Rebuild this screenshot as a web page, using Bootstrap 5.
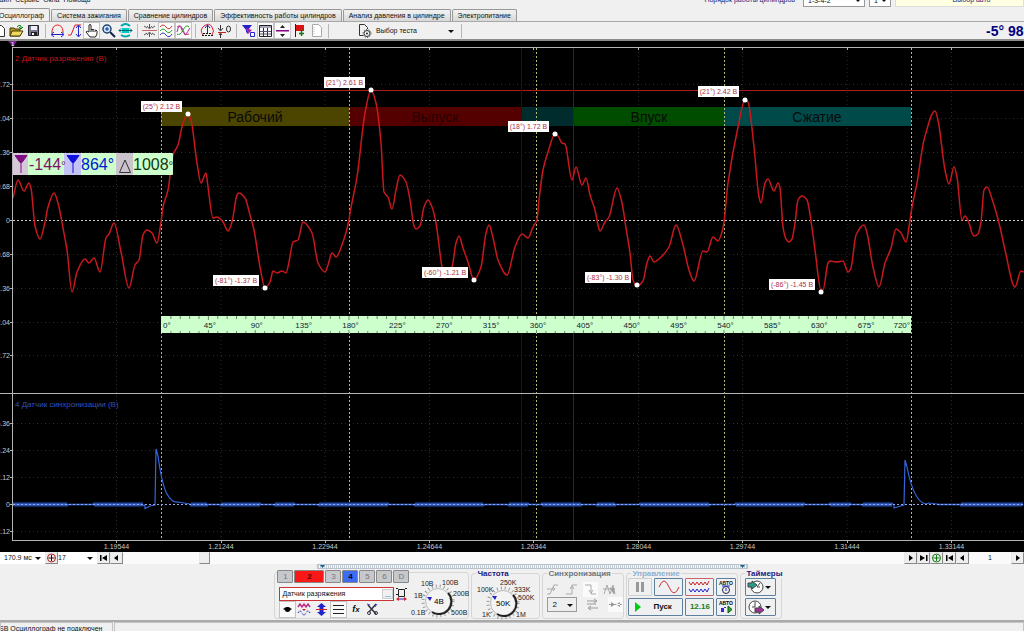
<!DOCTYPE html>
<html lang="ru">
<head>
<meta charset="utf-8">
<meta name="viewport" content="width=device-width, initial-scale=1">
<title>Осциллограф</title>
<link href="https://cdn.jsdelivr.net/npm/bootstrap@5.3.0/dist/css/bootstrap.min.css" rel="stylesheet">
<style>
body{height:100vh;overflow:hidden;background:#f0f0f0;color:#111;font:7px/12px "Liberation Sans",Arial,sans-serif}
button,input,select{font:inherit;color:inherit;border-radius:0;margin:0}
a{color:inherit;text-decoration:none}
svg{display:block;flex:none}
.menu-bar{height:9px}
.menu-bar>*{height:14px;line-height:14px;margin-bottom:2px}
.menu-links{margin-left:-6px}
.navy{color:#1a1a80}
.pick{appearance:none;background:#fff;border:1px solid #999;padding:0 4px}
.drop{position:relative}
.drop select{width:100%;height:100%}
.drop::after{content:"";position:absolute;right:4px;top:50%;margin-top:-1px;border:3px solid transparent;border-top-color:#111;border-bottom:0;pointer-events:none}
.w-order{width:62px}.w-num{width:22px}.w-time{width:45px}.w-frame{width:39px}
.auto-pick{background:#ffffe1;border:1px solid #ddd;border-top:0;width:129px;padding:0}
.tabs-row{height:13px;border-bottom:1px solid #a8a8a8;gap:1px}
.tab-btn{height:12px;line-height:11px;padding:0 5px;border:1px solid #989898;border-bottom:0;background:linear-gradient(#f2f2f2,#d8d8d8);border-radius:2px 2px 0 0;white-space:nowrap}
.tab-btn.active{background:#f0f0f0;height:13px;margin-left:-7px}
.tools{height:19px;border-bottom:2px solid #8a8d8a}
.tool{width:17px;height:17px;border:1px solid transparent;background:none;padding:0}
.tool.on{background:#fafafa;border-color:#c4c4c4}
.tools-start{margin-left:-9px}
.sep{width:1px;height:14px;background:#b8b8b8;margin:0 3px}
.test-pick{background:none;border:0;padding:0 4px 0 0;width:101px;margin-left:25px}
.angle{width:38px;font-size:14px;font-weight:700;color:#000080}
.plot{background:#000;min-height:0}
.plot svg{width:100%;height:100%}
.scroll-row{height:12px;background:#fafafa}
.sbtn{height:12px;width:13px;padding:0;border:1px solid #e8e8e8;border-right-color:#888;border-bottom-color:#888;background:#eee}
.thumb{width:11px}
.page-no{width:42px}
.track{height:12px;background:#fafafa;padding-left:76px}
.dock{height:57px}
.split-bar{height:5px;margin-left:31%;width:42%;border:1px solid #b9c2cc;background:repeating-linear-gradient(90deg,#c4ccd6 0 1px,#f4f6f8 1px 2px)}
.groups{padding-left:26.8%;border-bottom:1px solid #aaa;height:52px;gap:2px}
fieldset.box{border:1px solid #d6d6d6;border-radius:3px;height:47px;margin-top:3px}
fieldset.titled{height:50px;margin-top:0}
fieldset.titled legend{float:none;width:auto;font-size:8px;line-height:9px;font-weight:700;margin:0 0 0 4px;padding:0 1px}
.w-ch{width:195px}.w-fr{width:69px}.w-sy{width:82px}.w-ct{width:112px}.w-tm{width:42px}
.ch-row{gap:1px;margin:-3px 0 0 -2px}
.name-row{gap:1px}
.ch{width:16px;height:13px;line-height:10px;font-size:8px;padding:0;border:1px solid #888;background:#c6c8cc;color:#777;border-radius:1px}
.ch.red{width:30px;background:#f81818;color:#500;font-weight:700}
.ch.blue{background:#3c6cf4;color:#002;font-weight:700}
.name-box{width:115px;border:1px solid #c33;background:#fff;height:14px}
.name-box input{border:0;padding:0 2px;width:102px;background:none}
.name-box button{border:1px solid #ccc;background:#f0f0f0;width:11px;height:10px;line-height:5px;padding:0}
.fx{font-size:9px}
.w-src{width:31px;height:15px;font-size:8px}
.w-src select{background:#eee}
.keys{grid-template-columns:24px 29px 29px 20px;gap:2px;padding-left:1px;font-size:8px}
.key{border:1px solid #5f7f9f;background:#eef0f2;padding:0;height:18px;border-radius:1px}
.key.off{border-color:#d0d0d0}
.key.r{border-color:#c66}
.key.start{grid-column:span 2}
.key.rate{color:#187818}
.pale{color:#8fb0d0}
.timers{gap:2px}
.k-t{width:31px}
.status{height:10px;border-top:1px solid #aaa;gap:1px}
.status>div{line-height:11px;border:1px solid #c4c4c4;border-bottom:0;height:12px}
.status .s-one{width:113px;text-indent:-7px}
.chart text{font-family:"Liberation Sans",Arial,sans-serif}
</style>
</head>
<body class="d-flex flex-column">
<nav class="menu-bar d-flex align-items-end overflow-hidden flex-shrink-0" aria-label="Меню">
  <div class="menu-links d-flex gap-1 flex-grow-1">
    <a href="#">Файл</a><a href="#">Сервис</a><a href="#">Окна</a><a href="#">Помощь</a>
  </div>
  <label for="order" class="navy me-2">Порядок работы цилиндров</label>
  <div class="drop w-order"><select id="order" class="pick"><option>1-3-4-2</option></select></div>
  <div class="drop ms-1 w-num"><select aria-label="Цилиндр" class="pick"><option>1</option></select></div>
  <button class="auto-pick ms-1 navy"><span class="ps-4">Выбор авто</span></button>
</nav>
<div class="tabs-row d-flex align-items-end flex-shrink-0" role="tablist">
  <button class="tab-btn active" role="tab">Осциллограф</button>
  <button class="tab-btn" role="tab">Система зажигания</button>
  <button class="tab-btn" role="tab">Сравнение цилиндров</button>
  <button class="tab-btn" role="tab">Эффективность работы цилиндров</button>
  <button class="tab-btn" role="tab">Анализ давления в цилиндре</button>
  <button class="tab-btn" role="tab">Электропитание</button>
</div>
<div class="tools d-flex align-items-center flex-shrink-0">
  <div class="tools-start d-flex align-items-center">
    <button class="tool" aria-label="Новый"><svg width="15" height="15" fill="#fff" stroke="#333"><path d="M4.500 2.500h5l3 3v8h-8z"/></svg></button>
    <button class="tool" aria-label="Открыть"><svg width="15" height="15"><path d="M1 5h4l1 1h5v7H1z" fill="#b89a2a" stroke="#443a00"/><path d="M3 8h11l-3 5H1z" fill="#f0d860" stroke="#443a00"/><path d="M8 4q2-3 4-1v2m-2-1 2 2 2-2" fill="none" stroke="#080"/></svg></button>
    <button class="tool" aria-label="Сохранить"><svg width="15" height="15"><path d="M2.500 2.500h10v10h-10z" fill="#778" stroke="#223"/><path d="M5 3h6v4H5z" fill="#eef"/><path d="M5 9h6v4H5z" fill="#222"/><path d="M6 10h2v2H6z" fill="#fff"/></svg></button>
    <i class="sep"></i>
    <button class="tool" aria-label="Ширина"><svg width="15" height="15" fill="none"><path d="M2 10V8q1-6 5.500-6T13 8v2" stroke="#d22"/><path d="M2 11.500h11M4 9l-3 2.500L4 14M11 9l3 2.500L11 14" stroke="#22c"/></svg></button>
    <button class="tool" aria-label="Высота"><svg width="15" height="15" fill="none"><path d="M1 12h3L8 2h6" stroke="#d22"/><path d="M11.500 3v10M9 5l2.500-3L14 5M9 11l2.500 3 2.500-3" stroke="#22c"/></svg></button>
    <button class="tool on" aria-label="Рука"><svg width="15" height="15"><path d="M5 9V2q1-1 2 0v5l1-1 1 1 1-.5 1 1 1-.5 1 1v3l-1.500 3H6L2 9q1-1.500 3 0zM7 7v2m2-2v2m2-1v1" fill="#fff" stroke="#222"/></svg></button>
    <button class="tool" aria-label="Масштаб"><svg width="15" height="15"><path d="m9 9 5 5" stroke="#124" stroke-width="2"/><circle cx="6" cy="6" r="4" fill="#cfe6ff" stroke="#246" stroke-width="1.500"/><path d="M4 6h4M6 4v4" stroke="#13a"/></svg></button>
    <button class="tool" aria-label="Растянуть"><svg width="15" height="15" fill="none"><path d="M3 3q4.500-4 9 0M3 12q4.500 3 9 0" stroke="#0aa" stroke-width="2"/><path d="M4 5h7v5H4z" fill="#0cc"/><path d="M1 7.500h13M3 5.500l-2 2 2 2m9-4 2 2-2 2M5 7.500h5" stroke="#066"/></svg></button>
    <i class="sep"></i>
    <button class="tool" aria-label="Центр"><svg width="15" height="15" fill="none"><path d="M0 7.500h15" stroke="#c66"/><path d="M2 3l3 2m8-2-3 2M2 12l3-2m8 2-3-2M7.500 1v4m0 9v-4M5 3l2.500 3L10 3m-5 9 2.500-3 2.500 3" stroke="#555"/></svg></button>
    <button class="tool on" aria-label="Раздельно"><svg width="15" height="15" fill="none"><path d="M1 4q3-4 6 0t6-1" stroke="#c33"/><path d="M1 8q3-4 6 0t6-1" stroke="#2a2"/><path d="M1 12q3-4 6 0t6-1" stroke="#33c"/></svg></button>
    <button class="tool on" aria-label="Совместно"><svg width="15" height="15" fill="none"><path d="M1 4q3-3 5 3t7 4" stroke="#c33"/><path d="M1 9q2-10 5-4t3 7 5-7" stroke="#a2a"/><path d="M1 11q3 2 6-4t6-3" stroke="#2a2"/></svg></button>
    <i class="sep"></i>
    <button class="tool" aria-label="Авто"><svg width="15" height="15" fill="none"><path d="M3 12q-4-5 1-9t8 1q3 4 0 8" stroke="#d22"/><path d="M7.500 2v8M5 5l2.500-3L10 5" stroke="#22c"/><path d="M2 12.500h11M3 10.500h9" stroke="#111" stroke-dasharray="2 1"/></svg></button>
    <button class="tool" aria-label="Ноль"><svg width="15" height="15" fill="none"><path d="M1 9.500h8" stroke="#c22"/><path d="M3.500 2v5M1 5l2.500 3L6 5M3.500 15v-4M2 12l1.500-2L5 12" stroke="#333"/><ellipse cx="11.500" cy="6" rx="2" ry="3" stroke="#333"/></svg></button>
    <i class="sep"></i>
    <button class="tool" aria-label="Маркеры"><svg width="15" height="15" fill="none"><path d="M1 2h10L7 7v4L5 9V7z" fill="#22c"/><path d="M5 5l6 2-4 4z" fill="#a2a"/><path d="M9.500 9.500h4v4h-4z" stroke="#22c" fill="#fff"/></svg></button>
    <button class="tool on" aria-label="Таблица"><svg width="15" height="15" fill="none"><path d="M1.500 2.500h12v11h-12zM5.500 5v8m4-8v8" stroke="#222"/><path d="M2 4h11M2 8.500h11M2 11h11" stroke="#557"/></svg></button>
    <button class="tool on" aria-label="Линия"><svg width="15" height="15" fill="#222"><path d="M1 7h13v1.500H1z" fill="#808"/><path d="M7.500 2 10 5H5zM7.500 14 10 11H5z"/></svg></button>
    <button class="tool" aria-label="Флаг"><svg width="15" height="15"><path d="M3.500 1v13" stroke="#222"/><path d="M4 2h8v6H4z" fill="#d11"/><path d="M9.500 6v7M7 10.500h5" stroke="#171" stroke-width="1.500"/></svg></button>
    <button class="tool" aria-label="Отчёт"><svg width="15" height="15"><path d="M3.500 1.500h6l3 3v9h-9z" fill="#fff" stroke="#aaa"/><path d="M5 4v8" stroke="#bbb" stroke-dasharray="1 1"/></svg></button>
    <i class="sep"></i>
    <button class="test-pick drop d-flex align-items-center"><svg width="15" height="15" fill="none" stroke="#333"><path d="M6 12.500H2.500v-11h5l3 3V6"/><circle cx="10" cy="10.500" r="3"/><circle cx="10" cy="10.500" r="4" stroke-dasharray="1 1.500"/><path d="M10 9.500v2m-1-1h2"/></svg><span class="ps-1">Выбор теста</span></button>
    <i class="sep"></i>
  </div>
  <output class="angle ms-auto text-nowrap overflow-hidden">-5° 980</output>
</div>

<main class="plot flex-grow-1">
<svg class="chart" viewBox="0 41 1024 511" role="img" aria-label="Осциллограмма">
  <g id="grid" stroke="#2b2b2b" stroke-dasharray="1 3"></g>
  <g shape-rendering="crispEdges">
    <rect x="161" y="107" width="189" height="19" fill="#4b4500"/>
    <rect x="349" y="107" width="172" height="19" fill="#550000"/>
    <rect x="521" y="107" width="52" height="19" fill="#002c2e"/>
    <rect x="573" y="107" width="151" height="19" fill="#004d00"/>
    <rect x="724" y="107" width="187" height="19" fill="#004a4a"/>
    <path d="M13 90.500H1024" stroke="#b01c1c"/>
    <path d="M521.500 48V540" stroke="#0c0c70"/>
    <path d="M573.500 48V540" stroke="#641010"/>
    <path d="M161.500 48V540M349.500 48V540M536.500 48V540M724.500 48V540M911.500 48V540" stroke="#b8b870" stroke-dasharray="2 2"/>
    <path d="M13 220.500H1024" stroke="#ccc" stroke-dasharray="2 2"/>
  </g>
  <g font-size="14" fill="#0a0a0a" text-anchor="middle">
    <text x="255" y="122">Рабочий</text><text x="435" y="122" fill="#250000">Выпуск</text><text x="649" y="122">Впуск</text><text x="817" y="122">Сжатие</text>
  </g>
  <path id="vac" fill="none" stroke="#c8181e" stroke-width="1.500"/>
  <path id="sync" fill="none" stroke="#3565dc" stroke-width="1.200"/>
  <path d="M13 504.500H1024" stroke="#8fa6e8" stroke-dasharray="2 2"/>
  <g stroke="#b4b4b4" shape-rendering="crispEdges" id="axes"><path d="M12 47.500H1024M12.500 47V540M0 393.500H1024M12 540.500H1024"/></g>
  <g id="scale" fill="#c8c8c8" font-size="7"></g>
  <path d="M8 41h9l-4 6z" fill="#7a1f8c"/><text x="11" y="46" font-size="6" fill="#fff">1</text>
  <text x="15" y="61" font-size="8" fill="#c0161c">2 Датчик разряжения (В)</text>
  <text x="15" y="407" font-size="8" fill="#3050c0">4 Датчик синхронизации (В)</text>
  <g id="ruler" font-size="8" fill="#123"></g>
  <g id="tags" font-size="7" fill="#b0303c"></g>
  <g>
    <rect x="13" y="153" width="160" height="22" rx="1" fill="#ccffcc"/>
    <path d="M13 153h15v22H13z" fill="#d6c8d8"/><path d="M64 153h17v22H64z" fill="#c4c4f4"/><path d="M116 153h17v22h-17z" fill="#ccc4cc"/>
    <path d="M15 155.500h12l-5 7h-2zM21 160v13" fill="#7c1080" stroke="#7c1080"/>
    <path d="M67 155.500h12l-5 7h-2zM73 160v13" fill="#1010e0" stroke="#1010e0"/>
    <path d="M119.500 172.500 125 160l5.500 12.500z" fill="none" stroke="#333"/>
    <g font-size="16"><text x="29" y="170" fill="#7c1068">-144<tspan font-size="12">°</tspan></text><text x="81" y="170" fill="#0018d0">864°</text><text x="133" y="170" fill="#123812">1008<tspan font-size="12">°</tspan></text></g>
  </g>
</svg>
</main>

<div class="scroll-row d-flex flex-shrink-0">
  <div class="drop w-time"><select class="pick border-0 ps-1" aria-label="Развёртка"><option>170.9 мс</option></select></div>
  <button class="sbtn" aria-label="Метка"><svg width="11" height="10" fill="none" stroke="#a22"><circle cx="5.500" cy="5" r="4"/><path d="M5.500 2v6m-3-3h6" stroke="#400"/></svg></button>
  <div class="drop w-frame"><select class="pick border-0 ps-0" aria-label="Кадр"><option>17</option></select></div>
  <button class="sbtn" aria-label="В начало"><svg width="11" height="10"><path d="M2 2h1.500v6H2zM9 2v6L4 5z"/></svg></button>
  <button class="sbtn" aria-label="Назад"><svg width="11" height="10"><path d="M7 2v6L3 5z"/></svg></button>
  <div class="track flex-grow-1"><button class="sbtn thumb d-block" aria-label="Ползунок"></button></div>
  <button class="sbtn" aria-label="Вперёд"><svg width="11" height="10"><path d="M4 2v6l4-3z"/></svg></button>
  <button class="sbtn" aria-label="В конец"><svg width="11" height="10"><path d="M2 2v6l5-3zM8 2h1.500v6H8z"/></svg></button>
  <button class="sbtn" aria-label="Добавить"><svg width="11" height="10" fill="none" stroke="#171"><circle cx="5.500" cy="5" r="4"/><path d="M5.500 2v6m-3-3h6"/></svg></button>
  <button class="sbtn" aria-label="Первый"><svg width="11" height="10"><path d="M2 2h1.500v6H2zM9 2v6L4 5z"/></svg></button>
  <button class="sbtn" aria-label="Предыдущий"><svg width="11" height="10"><path d="M7 2v6L3 5z"/></svg></button>
  <output class="page-no text-center">1</output>
  <button class="sbtn" aria-label="Следующий"><svg width="11" height="10"><path d="M4 2v6l4-3z"/></svg></button>
</div>

<section class="dock flex-shrink-0">
  <div class="split-bar d-flex justify-content-between"><svg width="8" height="3"><path d="M2 0h5L4.500 3z" fill="#168"/></svg><svg width="8" height="3"><path d="M1 0h5L3.500 3z" fill="#168"/></svg></div>
  <div class="groups d-flex align-items-start">
    <fieldset class="box w-ch d-flex" aria-label="Канал">
      <div class="ps-1">
        <div class="ch-row d-flex">
          <button class="ch">1</button><button class="ch red">2</button><button class="ch">3</button><button class="ch blue">4</button><button class="ch">5</button><button class="ch">6</button><button class="ch">D</button>
        </div>
        <div class="name-row d-flex align-items-center mt-1">
          <div class="name-box d-flex align-items-center"><input aria-label="Название канала" value="Датчик разряжения"><button>...</button></div>
          <svg width="13" height="13" fill="none"><path d="M3.500 1.500h6v7h-6zM1 .5h2m7 0h2M1 6.500h2" stroke="#222"/><path d="M1 11l3-2v4zM12 11l-3-2v4z" fill="#c22"/><path d="M4 11h5" stroke="#22c"/></svg>
        </div>
        <div class="d-flex align-items-center">
          <button class="tool on" aria-label="Показать"><svg width="15" height="15"><path d="M3 7q4-4 9 0-4 4-9 0z" fill="#222"/><circle cx="7.500" cy="7.500" r="2.500"/></svg></button>
          <button class="tool" aria-label="Фильтр"><svg width="15" height="15" fill="none"><path d="M1 5l2-3 2 3 2-3 2 3 2-3 2 3" stroke="#c2308a" stroke-width="1.500"/><path d="M1 11q2-4 4 0t4 0 4 0" stroke="#22c" stroke-dasharray="2 1"/><path d="M5 7h4l-2 2z" fill="#c22"/></svg></button>
          <button class="tool" aria-label="Инверсия"><svg width="15" height="15"><path d="M7.500 1 12 5H9.500v5H12l-4.500 4L3 10h2.500V5H3z" fill="#22c"/><path d="M2 7.500h11" stroke="#c22"/></svg></button>
          <button class="tool on" aria-label="Линии"><svg width="15" height="15"><path d="M2 3.500h11M2 7.500h11M2 11.500h11" stroke="#222"/></svg></button>
          <button class="tool fx fst-italic fw-bold">f<small>x</small></button>
          <button class="tool" aria-label="Настройки"><svg width="15" height="15" fill="none" stroke="#334"><path d="M3 3l8 9M11 2 4 10" stroke-width="1.500"/><circle cx="4" cy="11" r="1.500"/><circle cx="11" cy="11" r="1.500"/><path d="M2 2l3 1M12 2l-2 3" stroke="#44c"/></svg></button>
        </div>
      </div>
      <svg width="60" height="45" viewBox="408 574 60 45" role="img" aria-label="Вольт на деление"><circle cx="437" cy="602" r="15" fill="none" stroke="#999" stroke-width="3" stroke-dasharray="1 3"/><circle cx="437" cy="602" r="12.500" fill="#f4f4f4" stroke="#bbb"/><path d="M447 594a12.500 12.500 0 0 1-16 19" fill="none" stroke="#222" stroke-width="2"/><path d="M426 598h5l-2 4z" fill="#22c"/><text x="433" y="605" font-size="8">4В</text><g font-size="7" fill="#222"><text x="420" y="587">10В</text><text x="441" y="586">100В</text><text x="452" y="597">200В</text><text x="450" y="616">500В</text><text x="410" y="616">0.1В</text><text x="413" y="599">1В</text></g></svg>
    </fieldset>
    <fieldset class="box titled w-fr"><legend class="navy">Частота</legend>
      <svg width="66" height="42" viewBox="473 577 66 42" role="img" aria-label="Частота дискретизации"><circle cx="504" cy="602" r="15" fill="none" stroke="#999" stroke-width="3" stroke-dasharray="1 3"/><circle cx="504" cy="602" r="12.500" fill="#f4f4f4" stroke="#bbb"/><path d="M514 594a12.500 12.500 0 0 1-16 19" fill="none" stroke="#222" stroke-width="2"/><path d="M493 595h5l-2 4z" fill="#22c"/><text x="497" y="605" font-size="8">50K</text><g font-size="7" fill="#222"><text x="478" y="591">100K</text><text x="501" y="584">250K</text><text x="515" y="591">333K</text><text x="519" y="599">500K</text><text x="517" y="616">1M</text><text x="483" y="616">1K</text></g></svg>
    </fieldset>
    <fieldset class="box titled w-sy"><legend class="text-secondary">Синхронизация</legend>
      <div class="d-flex justify-content-around pt-1 pe-1">
        <svg width="15" height="15" fill="none" stroke="#aaa"><path d="M2 12h3L9 3h4M2 7h8m-2-2 2 2-2 2"/></svg>
        <svg width="15" height="15" fill="none" stroke="#aaa"><path d="M2 12h6V3h5M6 7l2-3 2 3"/></svg>
        <svg width="15" height="15" fill="none" stroke="#aaa"><path fill="#fafafa" stroke="none" d="M0 0h15v15H0z"/><path d="M2 3h6v9h5M6 8l2 3 2-3"/></svg>
        <svg width="15" height="15" fill="none" stroke="#aaa"><path d="M2 12l3-9 3 9 3-9 2 9M1 7h12" /><path d="M8 6h4v6z" fill="#999"/></svg>
      </div>
      <div class="d-flex align-items-center ps-1 gap-2">
        <div class="drop w-src"><select class="pick" aria-label="Канал синхронизации"><option>2</option></select></div>
        <svg width="15" height="15" fill="none" stroke="#999"><path d="M2 4h9M9 2l3 2-3 2M4 11h9M6 9l-3 2 3 2M2 7h9"/></svg>
        <svg width="15" height="15" fill="#999"><path fill="#fafafa" d="M0 0h15v15H0z"/><path d="M1 7h13v1H1zM3 5l4 2.500L3 10zM12 5 8 7.500l4 2.500z"/></svg>
      </div>
    </fieldset>
    <fieldset class="box titled w-ct"><legend class="pale">Управление</legend>
      <div class="keys d-grid">
        <button class="key off" aria-label="Пауза"><svg class="m-auto" width="10" height="12" fill="#999"><path d="M1 1h3v10H1zM6 1h3v10H6z"/></svg></button>
        <button class="key" aria-label="Одна волна"><svg class="m-auto" width="22" height="14" fill="none" stroke="#c33"><path d="M1 7q5-12 10 0t10 0"/></svg></button>
        <button class="key r" aria-label="Много волн"><svg class="m-auto" width="24" height="14" fill="none"><path d="M1 2l2 3 2-3 2 3 2-3 2 3 2-3 2 3 2-3 2 3 2-4" stroke="#c22"/><path d="M1 9l2 3 2-3 2 3 2-3 2 3 2-3 2 3 2-3 2 3 2-4" stroke="#22c"/></svg></button>
        <button class="key" aria-label="Авто"><svg class="m-auto" width="16" height="15" fill="none" stroke="#224"><text x="1" y="5" font-size="5" font-weight="700" fill="#111" stroke="none">АВТО</text><circle cx="8" cy="10" r="3.500"/><path d="M4 6h8M8 8v3" stroke="#22c"/></svg></button>
        <button class="key start d-flex align-items-center fw-bold"><svg width="16" height="14"><path d="M6 2v10l6-5z" fill="#0c1"/></svg><span class="ps-2">Пуск</span></button>
        <button class="key rate fw-bold">12.16</button>
        <button class="key" aria-label="Автозапуск"><svg class="m-auto" width="16" height="15"><text x="1" y="5" font-size="5" font-weight="700">АВТО</text><path d="M3 8h3v4H3zM6 7h2v1H6z" fill="#42c"/><path d="M10 6v7l4-3.500z" fill="#2a2" stroke="#151"/></svg></button>
      </div>
    </fieldset>
    <fieldset class="box titled w-tm"><legend class="navy">Таймеры</legend>
      <div class="timers d-flex flex-column align-items-start ps-1">
        <button class="key k-t drop" aria-label="Таймер пуска"><svg width="20" height="16" fill="none" stroke="#444"><circle cx="11" cy="8" r="6" fill="#fff"/><path d="M11 8l3-4M11 8h3"/><path d="M2 4h4V2l5 4-5 4V8H2z" fill="#2a9a8a"/></svg></button>
        <button class="key k-t drop" aria-label="Таймер стопа"><svg width="20" height="16" fill="none" stroke="#444"><circle cx="9" cy="8" r="6" fill="#fff"/><path d="M9 8V3M9 8H6"/><path d="M9 9h4V7l5 4-5 4v-2H9z" fill="#a0309a"/></svg></button>
      </div>
    </fieldset>
  </div>
</section>
<footer class="status d-flex flex-shrink-0 overflow-hidden">
  <div class="s-one text-nowrap overflow-hidden">USB Осциллограф не подключен</div><div class="flex-grow-1"></div>
</footer>

<script src="https://cdn.jsdelivr.net/npm/bootstrap@5.3.0/dist/js/bootstrap.bundle.min.js"></script>
<script>
(() => {
  const $ = id => document.getElementById(id);
  // grid, scale labels and axis ticks
  const upper = [[84.5,'2.72'],[118.5,'2.04'],[152.5,'1.36'],[186.5,'0.68'],[220.5,'0'],[254.5,'0.68'],[288.5,'1.36'],[322.5,'2.04'],[355.5,'2.72']];
  const lower = [[423.5,'6.36'],[450.5,'4.24'],[477.5,'2.12'],[504.5,'0'],[531.5,'2.12']];
  const times = [[116.5,'1.19544'],[221,'1.21244'],[325,'1.22944'],[429.5,'1.24644'],[533.5,'1.26344'],[638.5,'1.28044'],[742.5,'1.29744'],[847,'1.31444'],[951.5,'1.33144']];
  let grid = '', scale = '', ticks = '';
  for (const [y, t] of [...upper, ...lower]) {
    grid += `<path d="M13 ${y}H1024"/>`;
    ticks += `M10 ${y}h3`;
    scale += `<text x="10" y="${y + 2}" text-anchor="end">${t}</text>`;
  }
  for (const [x, t] of times) {
    grid += `<path d="M${x} 48V540"/>`;
    ticks += `M${x} 47v3M${x} 540v3`;
    scale += `<text x="${x}" y="549" text-anchor="middle">${t}</text>`;
  }
  $('grid').innerHTML = grid;
  $('scale').innerHTML = scale;
  $('axes').innerHTML += `<path d="${ticks}"/>`;

  // vacuum sensor trace, smoothed through its samples
  const p = `13,198 18,180 24,191 29,183 31,188 35,226 40,239 45,222 48,207 54,193 58,203 63,228 67,250 72,292 77,272 85,259 89,263 94,258 100,272 106,238 109,234 114,223 121,252 129,288 135,265 139,260 143,235 147,230 152,233 157,243 161,222 163,207 168,190 173,155 178,145 183,123 188,114 191,120 197,163 201,183 206,173 208,187 213,218 217,217 223,222 228,231 232,222 237,195 239,193 245,198 250,215 254,230 260,267 265,288 270,282 273,271 277,273 282,271 286,273 289,262 293,242 298,240 303,222 312,233 318,263 325,272 328,265 332,253 336,257 343,242 349,220 350,213 357,177 365,113 371,90 376,103 381,143 384,192 388,197 392,209 396,190 400,175 406,182 410,200 414,226 416,229 420,226 424,207 428,200 432,207 436,223 442,267 445,278 452,267 456,243 459,236 463,248 468,262 474,280 481,267 486,233 489,225 493,238 498,260 507,275 515,247 522,234 528,238 533,227 537,220 539,200 543,170 548,152 555,134 558,136 562,143 565,144 572,180 576,167 582,185 586,178 590,195 595,210 598,225 600,231 605,222 609,217 617,188 622,203 626,228 630,253 633,280 637,286 643,281 647,263 650,256 654,262 660,258 669,247 676,225 683,245 689,270 694,281 703,251 707,252 713,237 718,241 722,232 724,222 728,183 738,127 745,100 748,102 754,147 759,197 761,203 765,183 768,179 774,191 778,183 780,188 783,227 786,239 789,242 792,239 795,223 798,200 802,196 807,200 812,228 815,250 821,290 823,290 828,263 830,261 837,262 843,261 848,272 851,268 856,235 864,225 867,233 873,267 879,287 885,263 891,248 896,229 901,233 906,242 909,227 912,207 917,183 924,140 935,111 938,120 945,170 949,184 954,167 957,177 962,220 965,216 969,223 972,233 974,236 978,234 981,222 984,190 987,187 993,202 1000,227 1005,250 1015,287 1021,271 1024,272`.split(' ').map(s => s.split(',').map(Number));
  // monotone slopes keep the peaks where the samples put them
  const n = p.length, s = [], m = [];
  for (let i = 0; i < n - 1; i++) s.push((p[i+1][1] - p[i][1]) / (p[i+1][0] - p[i][0]));
  for (let i = 0; i < n; i++) m.push(i === 0 ? s[0] : i === n - 1 ? s[n-2] : s[i-1] * s[i] <= 0 ? 0 : 2 * s[i-1] * s[i] / (s[i-1] + s[i]));
  let d = `M${p[0]}`;
  for (let i = 0; i < n - 1; i++) {
    const h = (p[i+1][0] - p[i][0]) / 3;
    d += `C${p[i][0]+h} ${p[i][1]+m[i]*h} ${p[i+1][0]-h} ${p[i+1][1]-m[i+1]*h} ${p[i+1]}`;
  }
  $('vac').setAttribute('d', d);

  // sync sensor trace: noisy baseline with two pulses
  let q = 'M13 504';
  const noise = (a, b) => { for (let x = a; x < b; x++) { const wide = Math.sin(x / 17) + Math.sin(x / 7.3) > -0.5; q += `L${x} ${504.5 + (x % 2 ? 1 : -1) * (wide ? 1.3 : 0.4)}`; } };
  noise(13, 144);
  q += 'L145 505L145 508.500L150 506L155 505L156 449L158 456Q162 485 167 494T178 502L190 504';
  noise(191, 893);
  q += 'L894 505L894 508L904 505L905 460L907 467Q911 488 917 497T929 503L937 504';
  noise(938, 1024);
  $('sync').setAttribute('d', q);

  // crank angle ruler
  let r = '<rect x="161" y="316" width="750" height="17" fill="#ccffcc"/>', t = '';
  for (let a = 9; a < 720; a += 9) { const x = 161.5 + a * 750 / 720, l = a % 45 ? 3 : 4; t += `M${x} 316v${l}M${x} 333v${-l + 1}`; }
  r += `<path d="${t}" stroke="#6a8a6a"/>`;
  for (let a = 0; a <= 720; a += 45) r += `<text y="328" x="${a === 0 ? 163 : a === 720 ? 910 : 163 + a * 750 / 720}" text-anchor="${a === 0 ? 'start' : a === 720 ? 'end' : 'middle'}">${a}°</text>`;
  $('ruler').innerHTML = r;

  // extremum tags
  $('tags').innerHTML = [[141,101,'(25°) 2.12 В',188,114],[324,77,'(21°) 2.61 В',371,90],[508,121,'(18°) 1.72 В',555,134],[698,86,'(21°) 2.42 В',745,100],[213,275,'(-81°) -1.37 В',265,288],[422,267,'(-60°) -1.21 В',474,280],[585,272,'(-83°) -1.30 В',637,285],[769,279,'(-86°) -1.45 В',821,292]]
    .map(([x, y, s, cx, cy]) => { const w = s.length > 12 ? 46 : 41; return `<rect x="${x}" y="${y}" width="${w}" height="11" fill="#fff"/><text x="${x + w / 2}" y="${y + 8}" text-anchor="middle">${s}</text><circle cx="${cx}" cy="${cy}" r="2.500" fill="#fff"/>`; }).join('');
})();
</script>
</body>
</html>
